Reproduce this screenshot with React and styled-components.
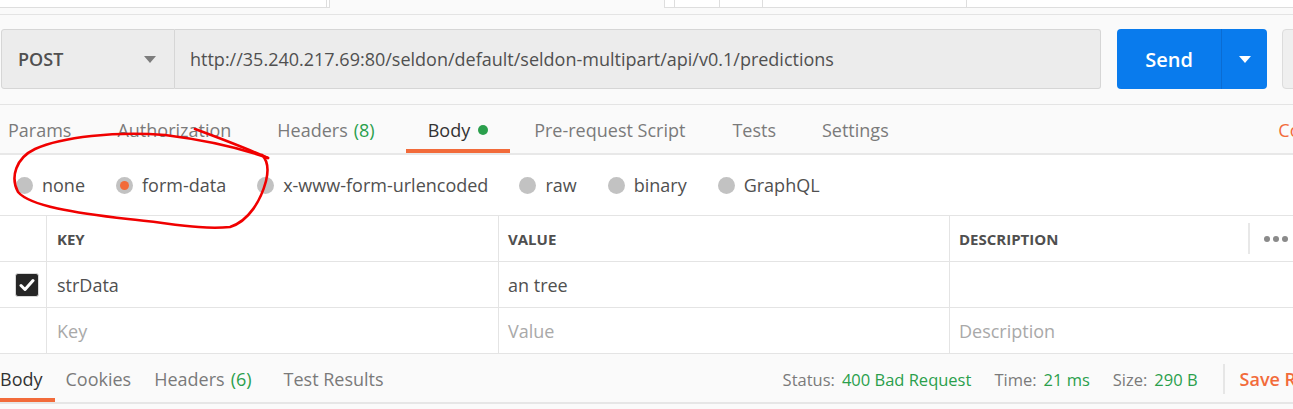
import React from "react";
import styled, { createGlobalStyle } from "styled-components";

const GlobalStyle = createGlobalStyle`
  html, body { margin: 0; padding: 0; background: #fafafa; }
  body { font-family: "Open Sans", "Liberation Sans", sans-serif; }
  * { box-sizing: border-box; }
`;

const GREEN = "#2a9f4c";
const ORANGE = "#f26b3a";
const LINE = "#e4e4e4";

const Page = styled.div`
  position: relative;
  width: 1293px;
  height: 409px;
  overflow: hidden;
  background: #fafafa;
  font-family: "Open Sans", "Liberation Sans", sans-serif;
  font-size: 18px;
`;

/* ---------- top strip (cut-off request tabs) ---------- */
const TopStrip = styled.div`
  display: flex;
  align-items: flex-start;
  height: 15px;
  border-bottom: 1px solid ${LINE};
`;
const StripGroup = styled.div`
  display: flex;
  height: 8px;
  background: #fff;
  border-bottom: 1px solid #dedede;
  border-left: ${(p) => (p.$left ? "1px solid #dedede" : "none")};
  margin-left: ${(p) => p.$offset || 0}px;
  flex: ${(p) => (p.$grow ? 1 : "none")};
`;
const StripCell = styled.div`
  width: ${(p) => (p.$w ? `${p.$w}px` : "auto")};
  flex: ${(p) => (p.$w ? "none" : 1)};
  border-right: ${(p) => (p.$noBorder ? "none" : "1px solid #dedede")};
`;

/* ---------- url row ---------- */
const UrlRow = styled.div`
  display: flex;
  align-items: stretch;
  height: 60px;
  margin-top: 14px;
  padding-left: 1px;
`;
const MethodBox = styled.div`
  width: 174px;
  flex: none;
  display: flex;
  align-items: center;
  justify-content: space-between;
  padding: 0 18px 0 16px;
  background: #ececec;
  border: 1px solid #d6d6d6;
  border-radius: 3px 0 0 3px;
  color: #505050;
  font-weight: 600;
  font-size: 18px;
`;
const Caret = styled.span`
  width: 0;
  height: 0;
  border-left: 6px solid transparent;
  border-right: 6px solid transparent;
  border-top: 7px solid ${(p) => p.$color || "#7d7d7d"};
`;
const UrlInput = styled.div`
  width: 926px;
  flex: none;
  display: flex;
  align-items: center;
  padding-left: 15px;
  background: #ececec;
  border: 1px solid #d6d6d6;
  border-left: none;
  border-radius: 0 3px 3px 0;
  color: #505050;
  font-size: 18px;
  white-space: nowrap;
`;
const SendButton = styled.div`
  display: flex;
  width: 150px;
  flex: none;
  margin-left: 16px;
  background: #097bed;
  border-radius: 4px;
  color: #fff;
`;
const SendLabel = styled.div`
  width: 105px;
  display: flex;
  align-items: center;
  justify-content: center;
  border-right: 1px solid #0a6cd3;
  font-weight: 600;
  font-size: 20px;
`;
const SendArrow = styled.div`
  flex: 1;
  display: flex;
  align-items: center;
  justify-content: center;
`;
const SaveBox = styled.div`
  width: 100px;
  flex: none;
  margin-left: 15px;
  background: #efefef;
  border: 1px solid #dcdcdc;
  border-radius: 4px;
`;

/* ---------- request tabs ---------- */
const TabBar = styled.div`
  display: flex;
  align-items: stretch;
  height: 51px;
  margin-top: 15px;
  padding-top: 2px;
  border-top: 1px solid ${LINE};
  border-bottom: 2px solid #e8e8e8;
  background: #fafafa;
`;
const TabList = styled.div`
  display: flex;
  margin-left: ${(p) => p.$offset}px;
`;
const Tab = styled.div`
  position: relative;
  display: flex;
  align-items: center;
  gap: 8px;
  padding: 0 ${(p) => p.$pad}px;
  margin-left: ${(p) => p.$shift || 0}px;
  color: ${(p) => (p.$active ? "#333" : "#7a7a7a")};
  white-space: nowrap;
  flex: none;
  &::after {
    content: "";
    display: ${(p) => (p.$active ? "block" : "none")};
    position: absolute;
    left: 0;
    right: 0;
    bottom: 0;
    height: 4px;
    background: ${ORANGE};
  }
`;
const Count = styled.span`
  color: ${GREEN};
  margin-left: 6px;
`;
const Dot = styled.span`
  width: 10px;
  height: 10px;
  border-radius: 50%;
  background: ${GREEN};
`;
const RightLink = styled.div`
  margin-left: auto;
  flex: none;
  display: flex;
  align-items: center;
  color: ${ORANGE};
  white-space: nowrap;
  margin-right: ${(p) => p.$pull}px;
`;

/* ---------- body types ---------- */
const RadioRow = styled.div`
  display: flex;
  align-items: center;
  gap: 31px;
  height: 61px;
  padding-left: 16px;
  background: #fff;
  border-bottom: 1px solid ${LINE};
`;
const RadioOption = styled.label`
  display: flex;
  align-items: center;
  gap: 9px;
  color: #505050;
  white-space: nowrap;
`;
const RadioDot = styled.span`
  width: 17px;
  height: 17px;
  border-radius: 50%;
  background: #c2c2c2;
  display: flex;
  align-items: center;
  justify-content: center;
  &::after {
    content: "";
    display: ${(p) => (p.$checked ? "block" : "none")};
    width: 9px;
    height: 9px;
    border-radius: 50%;
    background: ${ORANGE};
  }
`;

/* ---------- table ---------- */
const Table = styled.div`
  background: #fff;
`;
const Row = styled.div`
  display: grid;
  grid-template-columns: 46px 452px 451px 1fr;
  height: 46px;
  border-bottom: 1px solid ${LINE};
`;
const Cell = styled.div`
  display: flex;
  align-items: center;
  padding-left: ${(p) => p.$pad ?? 10}px;
  border-left: ${(p) => (p.$first ? "none" : `1px solid ${LINE}`)};
  color: ${(p) => (p.$placeholder ? "#a9a9a9" : "#505050")};
  font-size: 18px;
  white-space: nowrap;
`;
const HeadCell = styled(Cell)`
  font-size: 15px;
  font-weight: 700;
  text-transform: uppercase;
  color: #4f4f4f;
`;
const HeadTitle = styled.span`
  flex: 1;
`;
const HeadTools = styled.div`
  align-self: center;
  height: 31px;
  width: 45px;
  border-left: 2px solid #e8e8e8;
  display: flex;
  align-items: center;
  gap: 3px;
  padding-left: 14px;
`;
const ToolDot = styled.span`
  width: 6px;
  height: 6px;
  border-radius: 50%;
  background: #8a8a8a;
`;
const CheckBox = styled.span`
  width: 24px;
  height: 24px;
  border-radius: 3px;
  background: #262626;
  border: 1px solid #d9d9d9;
  box-shadow: inset 0 0 0 1px #262626;
  display: flex;
  align-items: center;
  justify-content: center;
`;

/* ---------- response bar ---------- */
const ResponseBar = styled.div`
  display: flex;
  align-items: stretch;
  height: 50px;
  padding-top: 2px;
  background: #fafafa;
  border-bottom: 2px solid #e6e6e6;
`;
const StatusGroup = styled.div`
  margin-left: auto;
  display: flex;
  align-items: center;
  gap: 23px;
  flex: none;
`;
const StatusItem = styled.span`
  color: #7a7a7a;
  font-size: 16.5px;
  white-space: nowrap;
`;
const StatusValue = styled.span`
  color: ${GREEN};
  margin-left: 7px;
`;
const VDivider = styled.span`
  width: 2px;
  height: 30px;
  background: #e6e6e6;
  margin-left: 2px;
`;
const SaveLink = styled.span`
  color: ${ORANGE};
  font-weight: 600;
  white-space: nowrap;
  margin-left: -8px;
  margin-right: -75px;
`;

const Annotation = styled.svg`
  position: absolute;
  left: 0;
  top: 0;
  pointer-events: none;
`;

const radios = [
  { label: "none" },
  { label: "form-data", checked: true },
  { label: "x-www-form-urlencoded" },
  { label: "raw" },
  { label: "binary" },
  { label: "GraphQL" },
];

export default function App() {
  return (
    <Page>
      <GlobalStyle />
      <TopStrip>
        <StripGroup>
          <StripCell $w={327} />
          <StripCell $w={3} />
        </StripGroup>
        <StripGroup $left $grow $offset={334}>
          <StripCell $w={10} />
          <StripCell $w={45} />
          <StripCell $w={43} />
          <StripCell $w={204} />
          <StripCell $noBorder />
        </StripGroup>
      </TopStrip>

      <UrlRow>
        <MethodBox>
          POST
          <Caret />
        </MethodBox>
        <UrlInput>http://35.240.217.69:80/seldon/default/seldon-multipart/api/v0.1/predictions</UrlInput>
        <SendButton>
          <SendLabel>Send</SendLabel>
          <SendArrow>
            <Caret $color="#fff" />
          </SendArrow>
        </SendButton>
        <SaveBox />
      </UrlRow>

      <TabBar>
        <TabList $offset={-15}>
          <Tab $pad={23}>Params</Tab>
          <Tab $pad={23}>Authorization</Tab>
          <Tab $pad={23}>
            <span>
              Headers<Count>(8)</Count>
            </span>
          </Tab>
          <Tab $pad={22} $shift={8} $active>
            Body <Dot />
          </Tab>
          <Tab $pad={24}>Pre-request Script</Tab>
          <Tab $pad={23}>Tests</Tab>
          <Tab $pad={23}>Settings</Tab>
        </TabList>
        <RightLink $pull={-51}>Cookies</RightLink>
      </TabBar>

      <RadioRow>
        {radios.map((r) => (
          <RadioOption key={r.label}>
            <RadioDot $checked={r.checked} />
            {r.label}
          </RadioOption>
        ))}
      </RadioRow>

      <Table>
        <Row>
          <Cell $first />
          <HeadCell>Key</HeadCell>
          <HeadCell $pad={9}>Value</HeadCell>
          <HeadCell $pad={9}>
            <HeadTitle>Description</HeadTitle>
            <HeadTools>
              <ToolDot />
              <ToolDot />
              <ToolDot />
            </HeadTools>
          </HeadCell>
        </Row>
        <Row>
          <Cell $first $pad={15}>
            <CheckBox>
              <svg width="16" height="14" viewBox="0 0 16 14">
                <path d="M2 7.5 L6 11.5 L14 2.5" fill="none" stroke="#fff" strokeWidth="3" strokeLinecap="round" strokeLinejoin="round" />
              </svg>
            </CheckBox>
          </Cell>
          <Cell>strData</Cell>
          <Cell $pad={9}>an tree</Cell>
          <Cell $pad={9} />
        </Row>
        <Row>
          <Cell $first />
          <Cell $placeholder>Key</Cell>
          <Cell $placeholder $pad={9}>Value</Cell>
          <Cell $placeholder $pad={9}>Description</Cell>
        </Row>
      </Table>

      <ResponseBar>
        <TabList $offset={-12}>
          <Tab $pad={12} $active>Body</Tab>
          <Tab $pad={11}>Cookies</Tab>
          <Tab $pad={12}>
            <span>
              Headers<Count>(6)</Count>
            </span>
          </Tab>
          <Tab $pad={20}>Test Results</Tab>
        </TabList>
        <StatusGroup>
          <StatusItem>
            Status:<StatusValue>400 Bad Request</StatusValue>
          </StatusItem>
          <StatusItem>
            Time:<StatusValue>21 ms</StatusValue>
          </StatusItem>
          <StatusItem>
            Size:<StatusValue>290 B</StatusValue>
          </StatusItem>
          <VDivider />
          <SaveLink>Save Response</SaveLink>
        </StatusGroup>
      </ResponseBar>

      <Annotation width="1293" height="409" viewBox="0 0 1293 409">
        <path
          d="M195 129 C 222 139, 248 149, 268 158"
          fill="none"
          stroke="#f00000"
          strokeWidth="2.6"
          strokeLinecap="round"
        />
        <path
          d="M268 158 C 240 148, 205 140, 165 135 C 115 131, 62 137, 35 149 C 16 158, 10 177, 18 192 C 30 206, 75 213, 128 219 C 170 223, 200 230, 230 227 C 249 221, 261 200, 266 181 C 269 169, 267 160, 262 155"
          fill="none"
          stroke="#f00000"
          strokeWidth="2.6"
          strokeLinecap="round"
          strokeLinejoin="round"
        />
      </Annotation>
    </Page>
  );
}
